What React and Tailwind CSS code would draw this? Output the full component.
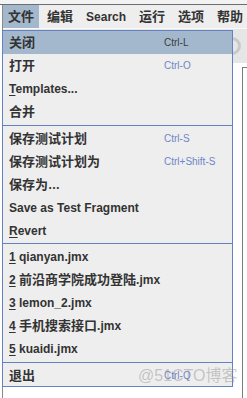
import React from 'react'

// split CJK runs so they can be drawn a touch larger than the latin text
const Txt = ({ children }) => {
  const parts = String(children).split(/([\u4e00-\u9fff]+)/)
  return parts.map((p, i) =>
    /[\u4e00-\u9fff]/.test(p)
      ? <span key={i} className="text-[13px]">{p}</span>
      : <span key={i}>{p}</span>
  )
}

const Sep = ({ top }) => (
  <div className={top === 1 ? 'mt-px mb-px h-px bg-[#6382bf]' : 'mt-[2px] mb-px h-px bg-[#6382bf]'} />
)

const Item = ({ label, acc, active, mn, num }) => (
  <div className={`flex h-[23px] items-center pl-[6px] ${active ? 'bg-[#a3b8cc]' : ''}`}>
    <span className="w-[155px] shrink-0 whitespace-nowrap text-[12px] font-bold leading-none text-[#333333]">
      {num && <><span className="underline underline-offset-2">{num}</span>{' '}</>}
      {mn ? (
        <>
          <span className="underline underline-offset-2">{label[0]}</span>
          {label.slice(1)}
        </>
      ) : (
        <Txt>{label}</Txt>
      )}
    </span>
    {acc && (
      <span className={`whitespace-nowrap text-[10px] leading-none ${active ? 'text-[#3c3c3c]' : 'text-[#6f86c8]'}`}>
        {acc}
      </span>
    )}
  </div>
)

const menus = ['文件', '编辑', 'Search', '运行', '选项', '帮助']

export default function App() {
  return (
    <div
      className="relative h-[398px] w-[247px] overflow-hidden bg-white"
      style={{ fontFamily: '"Liberation Sans", "Noto Sans CJK SC", sans-serif' }}
    >
      <div className="h-[4px] bg-[#f3f3f3]" />
      <div className="h-px bg-[#6e6e6e]" />

      <div className="pl-[2px]">
        <div className="flex h-[393px] flex-col border-l border-[#8a8a8a]">
          {/* menu bar */}
          <div className="flex h-[23px] gap-[3px] overflow-hidden bg-[#eeeeee]">
            {menus.map((m, i) => (
              <div
                key={m}
                className={`flex shrink-0 items-center whitespace-nowrap px-[5px] text-[12px] font-bold leading-none text-[#333333] ${i === 0 ? 'bg-[#a3b8cc]' : ''}`}
              >
                <Txt>{m}</Txt>
              </div>
            ))}
          </div>

          {/* toolbar behind the popup */}
          <div className="flex h-[35px] items-center justify-end border-t border-[#f8f8f8] bg-[#e6e6e6] pr-[6px]">
            <div className="h-[18px] w-[18px] rounded-full border-[3px] border-[#c9c9c9]" />
          </div>

          <div className="flex flex-1">
            <div className="flex-1" />
            <div className="mt-[4px] w-[5px] border-l border-t border-[#7a7a7a]" />
          </div>
        </div>
      </div>

      {/* file menu popup */}
      <div className="absolute left-[2px] top-[30px] w-[231px] border border-[#6382bf] bg-[#eeeeee]">
        <Item label="关闭" acc="Ctrl-L" active />
        <Item label="打开" acc="Ctrl-O" />
        <Item label="Templates..." mn />
        <Item label="合并" />
        <Sep />
        <Item label="保存测试计划" acc="Ctrl-S" />
        <Item label="保存测试计划为" acc="Ctrl+Shift-S" />
        <Item label="保存为…" />
        <Item label="Save as Test Fragment" />
        <Item label="Revert" mn />
        <Sep top={1} />
        <Item num="1" label="qianyan.jmx" />
        <Item num="2" label="前沿商学院成功登陆.jmx" />
        <Item num="3" label="lemon_2.jmx" />
        <Item num="4" label="手机搜索接口.jmx" />
        <Item num="5" label="kuaidi.jmx" />
        <Sep />
        <div className="h-[22px]">
          <Item label="退出" acc="Ctrl-Q" />
        </div>
      </div>

      {/* watermark */}
      <div className="pointer-events-none absolute left-[138px] top-[368px] whitespace-nowrap text-[16px] leading-none text-[rgba(140,140,140,0.45)]">
        @51CTO博客
      </div>
    </div>
  )
}
